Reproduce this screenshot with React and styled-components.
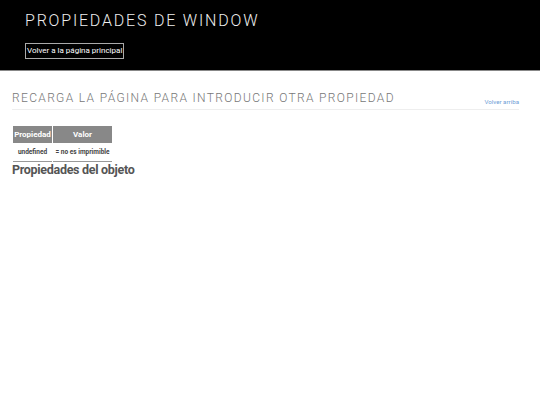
import React from 'react';
import styled, { createGlobalStyle } from 'styled-components';

const Global = createGlobalStyle`
  html, body { margin: 0; padding: 0; background: #fff; }
  body { font-family: Roboto, "Liberation Sans", sans-serif; }
`;

const Header = styled.header`
  background: #000;
  border-bottom: 1px solid #888;
  padding: 12px 25px 10px;
  height: 48px;
`;

const Title = styled.h1`
  margin: 0;
  font-weight: 300;
  font-size: 16px;
  line-height: 18px;
  letter-spacing: 1.8px;
  color: #eee;
`;

const BackButton = styled.a`
  display: inline-block;
  margin-top: 13px;
  border: 1px solid #aaa;
  padding: 1px 1px 2px 1px;
  font-size: 8px;
  line-height: 11px;
  color: #fff;
  text-decoration: none;
`;

const Main = styled.main`
  padding: 20px 21px 0 12px;
`;

const SectionHead = styled.div`
  display: flex;
  align-items: flex-end;
  justify-content: space-between;
  border-bottom: 1px solid #eee;
  padding-bottom: 3px;
`;

const Subtitle = styled.h2`
  margin: 0;
  font-weight: 300;
  font-size: 12px;
  line-height: 15px;
  letter-spacing: 1.35px;
  color: #777;
`;

const TopLink = styled.a`
  font-size: 6.2px;
  color: #6f9ed6;
  text-decoration: none;
`;

const Table = styled.table`
  margin-top: 16px;
  margin-left: 0;
  border-collapse: separate;
  border-spacing: 1px 0;
`;

const Th = styled.th`
  background: #888;
  color: #fff;
  font-size: 8px;
  font-weight: 700;
  height: 17px;
  padding: 0 1px;
  width: ${p => p.w || 'auto'};
`;

const Td = styled.td`
  font-size: 6.5px;
  font-weight: 700;
  color: #444;
  text-align: center;
  white-space: nowrap;
  padding: 5px 2px 5px;
  border-bottom: 1px solid #999;
`;

const ObjectTitle = styled.h3`
  margin: 0;
  font-size: 12.5px;
  font-weight: 700;
  letter-spacing: -0.3px;
  color: #555;
  line-height: 16px;
`;

export default function App() {
  return (
    <>
      <Global />
      <Header>
        <Title>PROPIEDADES DE WINDOW</Title>
        <BackButton href="#">Volver a la página principal</BackButton>
      </Header>
      <Main>
        <SectionHead>
          <Subtitle>RECARGA LA PÁGINA PARA INTRODUCIR OTRA PROPIEDAD</Subtitle>
          <TopLink href="#">Volver arriba</TopLink>
        </SectionHead>
        <Table>
          <thead>
            <tr>
              <Th w="37px">Propiedad</Th>
              <Th w="57px">Valor</Th>
            </tr>
          </thead>
          <tbody>
            <tr>
              <Td>undefined</Td>
              <Td>= no es imprimible</Td>
            </tr>
          </tbody>
        </Table>
        <ObjectTitle>Propiedades del objeto</ObjectTitle>
      </Main>
    </>
  );
}
